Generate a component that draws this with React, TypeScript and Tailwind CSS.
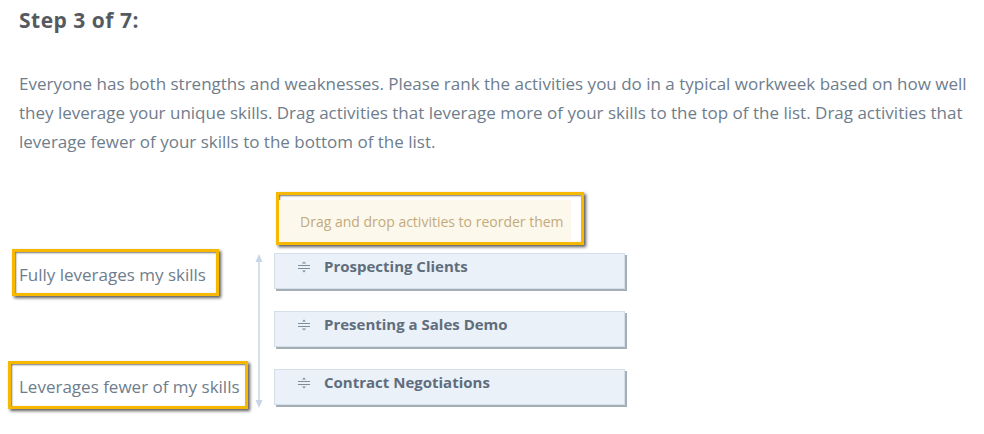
import { ReactNode } from "react";

const activities = ["Prospecting Clients", "Presenting a Sales Demo", "Contract Negotiations"];

function Callout({ children, className = "" }: { children: ReactNode; className?: string }) {
  return (
    <div
      className={`border-[3px] border-[#f6b800] shadow-[2px_2px_3px_rgba(0,0,0,0.65),inset_1px_1px_2px_rgba(0,0,0,0.55)] ${className}`}
    >
      {children}
    </div>
  );
}

function GripIcon() {
  return (
    <svg width="14" height="14" viewBox="0 0 14 14" className="text-[#7f8c99]">
      <path d="M7 1.5 L9 3.5 H5 Z" fill="currentColor" />
      <path d="M1 5.5 H13 M1 8.5 H13" stroke="currentColor" strokeWidth="1" />
      <path d="M7 12.5 L9 10.5 H5 Z" fill="currentColor" />
    </svg>
  );
}

function RankArrow() {
  return (
    <svg width="10" height="154" viewBox="0 0 10 154" className="text-[#c6d6e6]">
      <path d="M5 4 V150" stroke="currentColor" strokeWidth="1.5" />
      <path d="M5 0 L8.5 8 H1.5 Z" fill="currentColor" />
      <path d="M5 154 L8.5 146 H1.5 Z" fill="currentColor" />
    </svg>
  );
}

export default function App() {
  return (
    <div className="bg-white w-[984px] h-[434px] overflow-hidden px-[19px] pt-[5px] font-['Open_Sans',sans-serif]">
      <h2 className="text-[21px] font-bold tracking-[0.5px] text-[#555a60] leading-[30px]">Step 3 of 7:</h2>

      <p className="mt-[34px] w-[955px] text-[17px] leading-[29px] text-[#6e7d8c]">
        Everyone has both strengths and weaknesses. Please rank the activities you do in a typical workweek based on how well
        they leverage your unique skills. Drag activities that leverage more of your skills to the top of the list. Drag
        activities that leverage fewer of your skills to the bottom of the list.
      </p>

      <div className="mt-[36px] ml-[257px] w-[308px]">
        <Callout className="bg-white h-[53px] pt-[5px] pr-[10px]">
          <div className="bg-[#fdf8ec] h-full flex items-center pl-[21px] text-[14px] text-[#c2aa7c]">
            Drag and drop activities to reorder them
          </div>
        </Callout>
      </div>

      <div className="flex -ml-[11px]">
        <div className="flex flex-col w-[244px] pt-[4px]">
          <Callout className="ml-[4px] w-[207px] h-[47px] flex items-center pl-[4px] pt-[4px] bg-white">
            <span className="text-[17px] text-[#6e7d8c]">Fully leverages my skills</span>
          </Callout>
          <Callout className="mt-[65px] w-[240px] h-[48px] flex items-center pl-[8px] pt-[4px] bg-white">
            <span className="text-[17px] text-[#6e7d8c]">Leverages fewer of my skills</span>
          </Callout>
        </div>

        <div className="ml-[2px] pt-[9px]">
          <RankArrow />
        </div>

        <ul className="ml-[10px] pt-[8px] flex flex-col gap-[22px]">
          {activities.map((name) => (
            <li
              key={name}
              className="w-[351px] h-[36px] bg-[#eaf1f8] border border-[#d3dfeb] shadow-[2px_2px_0_#a5adb5] flex items-start pt-[1px] pl-[22px] gap-[13px]"
            >
              <span className="mt-[5px]">
                <GripIcon />
              </span>
              <span className="text-[15px] font-bold text-[#5f6d7c] leading-[22px]">{name}</span>
            </li>
          ))}
        </ul>
      </div>
    </div>
  );
}
